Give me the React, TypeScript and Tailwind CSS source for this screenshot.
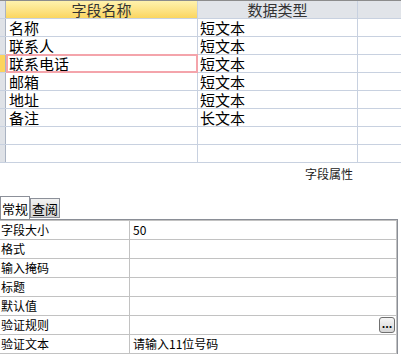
const fields = [
  { name: '名称', type: '短文本' },
  { name: '联系人', type: '短文本' },
  { name: '联系电话', type: '短文本' },
  { name: '邮箱', type: '短文本' },
  { name: '地址', type: '短文本' },
  { name: '备注', type: '长文本' },
  { name: '', type: '' },
  { name: '', type: '' },
]

const props = [
  { label: '字段大小', value: '50' },
  { label: '格式', value: '' },
  { label: '输入掩码', value: '' },
  { label: '标题', value: '' },
  { label: '默认值', value: '' },
  { label: '验证规则', value: '', builder: true },
  { label: '验证文本', value: '请输入11位号码' },
]

const font = { fontFamily: '"Noto Sans CJK SC", "Liberation Sans", sans-serif' }

export default function App() {
  return (
    <div className="relative h-[354px] w-[401px] overflow-hidden bg-white text-black" style={font}>
      {/* field grid */}
      <div className="border-t border-[#8c8c8c]">
        <div className="flex h-[18px] border-b border-[#c8d1e0]">
          <div className="w-[6px] shrink-0 border-r border-[#aab3c2] bg-[#dfe2e7]" />
          <div className="flex w-[192px] shrink-0 items-center justify-center border-r border-[#c8d1e0] bg-gradient-to-b from-[#fff2ad] to-[#fbd65e] text-[15px] leading-[15px] text-[#333]">
            字段名称
          </div>
          <div className="flex w-[160px] shrink-0 items-center justify-center border-r border-[#c8d1e0] bg-[#e1e4e9] text-[15px] leading-[15px] text-[#333]">
            数据类型
          </div>
          <div className="flex-1 bg-[#e1e4e9]" />
        </div>
        {fields.map((f, i) => {
          const current = i === 2
          return (
            <div key={i} className="flex h-[18px] border-b border-[#c8d1e0]">
              <div className={`w-[6px] shrink-0 border-r border-[#aab3c2] ${current ? 'bg-[#fcd45c]' : 'bg-[#dfe2e7]'}`} />
              <div className="relative flex w-[192px] shrink-0 items-center border-r border-[#c8d1e0] pl-[3px] text-[15px] leading-[15px]">
                {f.name}
                {current && <span className="absolute -top-px -bottom-px left-0 -right-px border-2 border-[#f4a4ab]" />}
              </div>
              <div className="flex w-[160px] shrink-0 items-center border-r border-[#c8d1e0] pl-[2px] text-[15px] leading-[15px]">
                {f.type}
              </div>
              <div className="flex-1" />
            </div>
          )
        })}
      </div>

      <div className="flex h-[31px] justify-end pr-[48px] pt-[4px] text-[12px] leading-[14px] text-[#222]">
        字段属性
      </div>

      {/* tabs */}
      <div className="flex h-[25px] items-end">
        <div className="flex h-[23px] items-center border border-b-0 border-[#8c9099] bg-white px-[1px] text-[13px] leading-[15px]">
          常规
        </div>
        <div className="mb-[1px] flex h-[20px] items-center border border-[#8c9099] bg-gradient-to-b from-[#f2f2f2] to-[#d4d4d4] px-[1px] text-[13px] leading-[15px]">
          查阅
        </div>
      </div>

      {/* property sheet */}
      <div className="w-[398px] border-t border-r border-[#8a8e96]">
        <div className="border-t border-r border-[#c2c2c2]">
          {props.map((p) => (
            <div key={p.label} className="flex h-[19px] border-b border-[#c2c2c2]">
              <div className="flex w-[130px] shrink-0 items-center border-r border-[#c2c2c2] pl-[1px] text-[12px] leading-[14px]">
                {p.label}
              </div>
              <div className="flex flex-1 items-center pl-[3px] text-[12px] leading-[14px]">
                <span className="flex-1">{p.value}</span>
                {p.builder && (
                  <span className="mr-[1px] flex h-[16px] w-[16px] items-center justify-center rounded-[3px] border border-[#707070] bg-gradient-to-b from-[#f6f6f6] to-[#d6d6d6] pb-[3px] text-[11px] font-bold leading-none">
                    ...
                  </span>
                )}
              </div>
            </div>
          ))}
        </div>
      </div>
    </div>
  )
}
